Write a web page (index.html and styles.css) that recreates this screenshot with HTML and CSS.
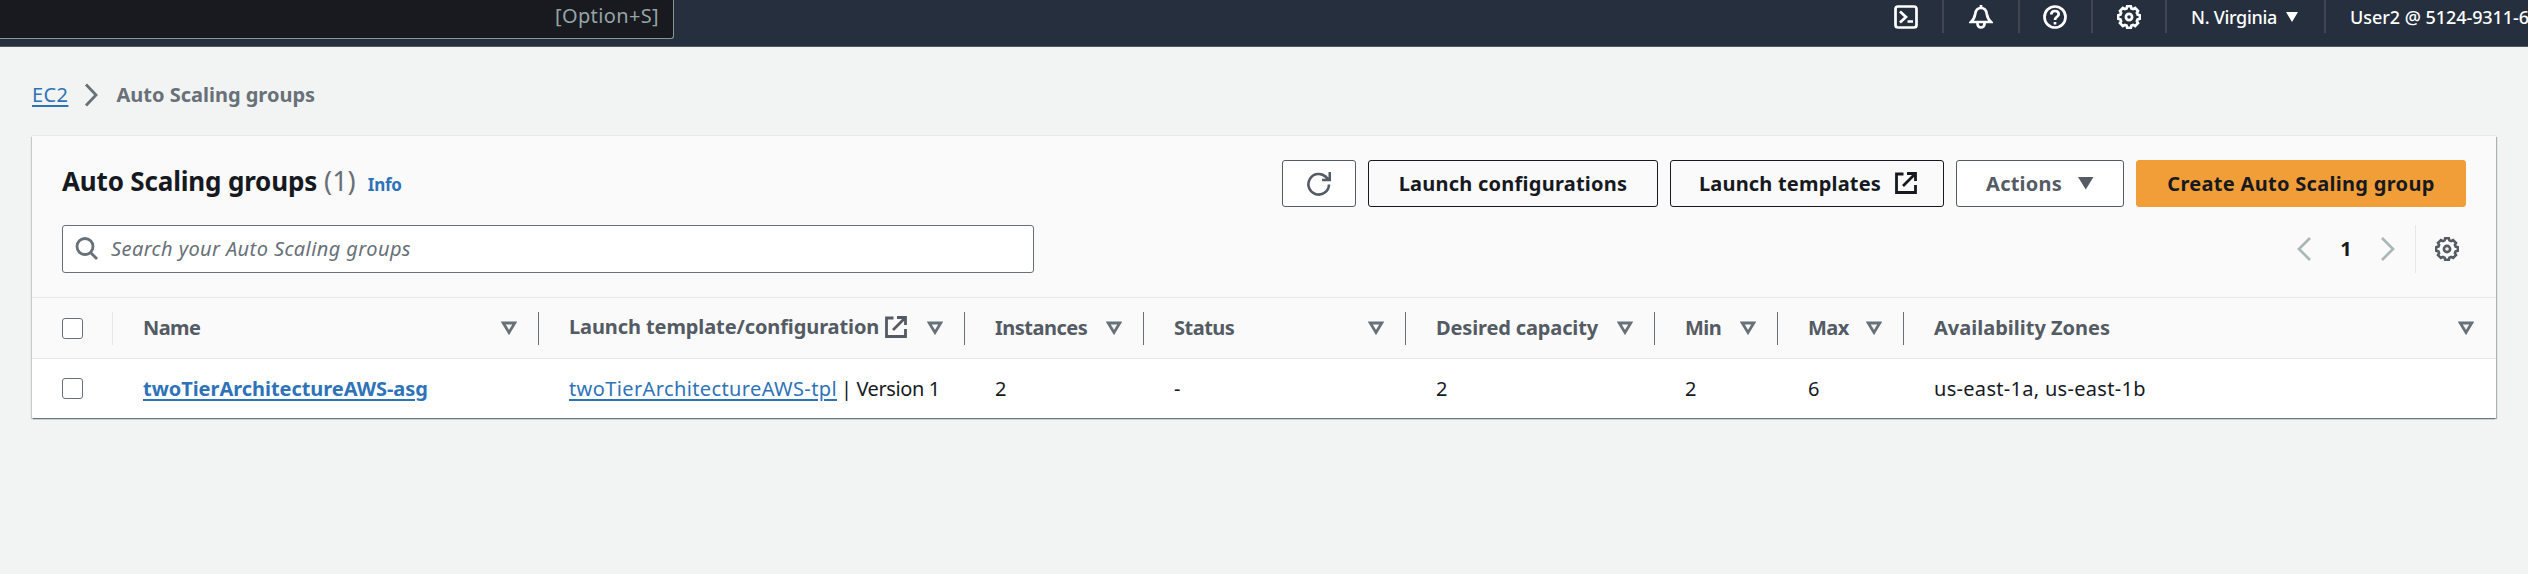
FILE: index.html
```
<!DOCTYPE html>
<html lang="en">
<head>
<meta charset="utf-8">
<title>Auto Scaling groups | EC2</title>
<link rel="stylesheet" href="styles.css">
</head>
<body>
<svg class="defs" aria-hidden="true">
  <symbol id="gear" viewBox="0 0 24 24"><path d="M10.2 1.2h3.6l.6 2.2 1.7.7 2-1.1 2.9 2.9-1.1 2 .7 1.7 2.2.6v3.6l-2.2.6-.7 1.7 1.1 2-2.9 2.9-2-1.1-1.7.7-.6 2.2h-3.6l-.6-2.2-1.7-.7-2 1.1L3 18.1l1.1-2-.7-1.7-2.2-.6v-3.6l2.2-.6.7-1.7-1.1-2L5.900 3l2 1.100 1.700-.7z"/><circle cx="12" cy="12" r="3.100"/></symbol>
  <symbol id="external" viewBox="0 0 22 22"><path d="M8.500 2H1.500v18.500h19V13M12 1.500h8.500V9M20 2 8 14"/></symbol>
  <symbol id="filter" viewBox="0 0 16 14"><path d="M2.200 2h11.600L8 11.500z"/></symbol>
</svg>

<header class="nav">
  <div class="nav-search"><span>[Option+S]</span></div>
  <div class="nav-tools">
    <div class="tool tool-shell"><svg class="icon24" viewBox="0 0 24 24"><rect x="1.500" y="1.500" width="21" height="21" rx="2.500"/><path d="M6 6.500 12 12l-6 5.500M13.500 16.500h5.500"/></svg></div>
    <div class="tool tool-bell"><svg class="icon24" viewBox="0 0 24 24"><path d="M12 0v3M2 17c3-2.500 3.500-4 4.200-8C6.700 5 9 3 12 3s5.300 2 5.800 6c.7 4 1.200 5.500 4.200 8z"/><path d="M8.500 17.500v1.500a3.500 3.500 0 0 0 7 0v-1.500"/></svg></div>
    <div class="tool tool-help"><svg class="icon24" viewBox="0 0 24 24"><circle cx="12" cy="12" r="10.500"/><path d="M8.300 9.500C8.300 7.200 9.800 6 12 6s3.700 1.200 3.700 3.200c0 2.600-3.700 2.600-3.700 5.800M12 17v2.500"/></svg></div>
    <div class="tool tool-settings"><svg class="icon24"><use href="#gear"/></svg></div>
    <div class="tool tool-region"><span>N. Virginia</span><svg class="nav-caret" viewBox="0 0 12 10"><path d="M0 0h12L6 10z"/></svg></div>
    <div class="tool tool-user">User2 @ 5124-9311-6</div>
  </div>
</header>

<nav class="breadcrumb">
  <a href="#">EC2</a>
  <svg class="crumb-sep" viewBox="0 0 14 24"><path d="M2 1.500 12 12 2 22.500"/></svg>
  <span class="crumb-current">Auto Scaling groups</span>
</nav>

<main class="panel">
  <div class="panel-head">
    <div class="title-row">
      <h1><span class="title">Auto Scaling groups</span><span class="count">(1)</span><a class="info">Info</a></h1>
      <div class="actions">
        <button class="btn btn-refresh" aria-label="Refresh"><svg viewBox="0 0 24 24"><path d="M22 12.500A10.300 10.300 0 1 1 19 5M22.800 0v8H15M18 4l4 4"/></svg></button>
        <button class="btn btn-dark btn-config">Launch configurations</button>
        <button class="btn btn-dark btn-templates">Launch templates<svg class="ext"><use href="#external"/></svg></button>
        <button class="btn btn-actions">Actions<svg class="caret" viewBox="0 0 16 13"><path d="M0 0h15.500L7.750 12.500z"/></svg></button>
        <button class="btn btn-primary">Create Auto Scaling group</button>
      </div>
    </div>
    <div class="tools-row">
      <div class="search"><svg viewBox="0 0 24 24"><circle cx="10" cy="9.500" r="8"/><path d="m15.500 15.500 6.500 6.500"/></svg><span>Search your Auto Scaling groups</span></div>
      <div class="pager">
        <svg class="chev" viewBox="0 0 14 24"><path d="M13 1 2 12l11 11"/></svg>
        <span class="page">1</span>
        <svg class="chev" viewBox="0 0 14 24"><path d="m1 1 11 11L1 23"/></svg>
        <div class="prefs"><svg><use href="#gear"/></svg></div>
      </div>
    </div>
  </div>

  <div class="grid grid-head">
    <div class="cell cell-check cell-check-head"><span class="checkbox"></span></div>
    <div class="cell"><span class="l-name">Name</span><svg class="filter"><use href="#filter"/></svg></div>
    <div class="cell"><span class="l-launch">Launch template/configuration<svg class="ext"><use href="#external"/></svg></span><svg class="filter"><use href="#filter"/></svg></div>
    <div class="cell"><span class="l-inst">Instances</span><svg class="filter"><use href="#filter"/></svg></div>
    <div class="cell"><span class="l-inst">Status</span><svg class="filter"><use href="#filter"/></svg></div>
    <div class="cell"><span class="l-desired">Desired capacity</span><svg class="filter"><use href="#filter"/></svg></div>
    <div class="cell"><span class="l-inst">Min</span><svg class="filter"><use href="#filter"/></svg></div>
    <div class="cell"><span class="l-inst">Max</span><svg class="filter"><use href="#filter"/></svg></div>
    <div class="cell"><span>Availability Zones</span><svg class="filter"><use href="#filter"/></svg></div>
  </div>
  <div class="grid grid-row">
    <div class="cell cell-check"><span class="checkbox"></span></div>
    <div class="cell"><a class="asg" href="#">twoTierArchitectureAWS-asg</a></div>
    <div class="cell"><a class="tpl" href="#">twoTierArchitectureAWS-tpl</a><span class="version">| Version 1</span></div>
    <div class="cell">2</div>
    <div class="cell">-</div>
    <div class="cell">2</div>
    <div class="cell">2</div>
    <div class="cell">6</div>
    <div class="cell"><span class="zones">us-east-1a, us-east-1b</span></div>
  </div>
</main>
</body>
</html>
```

FILE: styles.css
```
* { box-sizing: border-box; }
body {
  margin: 0;
  height: 574px;
  overflow: hidden;
  background: #f2f3f3;
  color: #16191f;
  font: 20px/30px "Noto Sans", "Open Sans", sans-serif;
  white-space: nowrap;
}
svg { display: block; flex: none; fill: none; stroke: currentColor; }
.defs { position: absolute; width: 0; height: 0; }
a { color: #2e73b8; text-underline-offset: 3px; text-decoration-thickness: 2px; }

/* Navigation */
.nav {
  display: flex;
  justify-content: space-between;
  height: 47px;
  background: #262f3e;
  border-bottom: 1px solid #545b64;
  overflow: hidden;
}
.nav-search {
  width: 674px;
  height: 39px;
  padding: 1px 14px 0 0;
  background: #191a1f;
  border: 1px solid #879596;
  border-width: 0 1px 1px 0;
  border-radius: 0 0 3px 0;
  color: #95a5a6;
  text-align: right;
  letter-spacing: .37px;
}
.nav-tools { display: flex; width: 658px; height: 33px; color: #fff; font-size: 18px; }
.tool { display: flex; flex: none; align-items: center; justify-content: center; border-right: 2px solid #414750; }
.tool:last-child { border-right: 0; }
.tool-shell { width: 74px; }
.tool-bell { width: 76px; }
.tool-help { width: 73px; padding-right: 1px; }
.tool-settings { width: 74px; }
.tool-region { width: 159px; justify-content: flex-start; padding-left: 24px; letter-spacing: -.3px; font-weight: 500; }
.tool-user { justify-content: flex-start; padding-left: 24px; font-weight: 500; letter-spacing: -.05px; }
.icon24 { width: 24px; height: 24px; stroke-width: 2.7; }
.nav-caret { width: 12px; height: 10px; margin-left: 9px; fill: currentColor; stroke: none; }

/* Breadcrumb */
.breadcrumb { display: flex; align-items: center; height: 30px; margin: 33px 0 0 32px; }
.breadcrumb a { letter-spacing: .4px; }
.crumb-sep { width: 14px; height: 24px; margin: 0 18px 0 16px; stroke: #687078; stroke-width: 2.8; }
.crumb-current { color: #687078; font-weight: 700; }

/* Panel */
.panel {
  margin: 26px 32px 0;
  background: #fff;
  box-shadow: 0 2px 1px -1px #6b757b, 1px 1px 1px 0 #a9b2b3, -1px 1px 1px 0 #c4cbcb, 0 -1px 0 0 #e8eaea;
}
.panel-head { height: 161px; padding: 24px 30px 0; background: #fafafa; }
.title-row, .tools-row { display: flex; justify-content: space-between; align-items: center; }
.title-row { height: 47px; }
.tools-row { height: 48px; margin-top: 18px; }
h1 { display: flex; align-items: baseline; margin: 0; padding-bottom: 2px; font-size: 26px; line-height: 40px; }
.title { letter-spacing: -.17px; }
.count { margin-left: 7px; color: #687078; font-size: 27px; font-weight: 400; }
.info { margin-left: 12px; font-size: 17px; letter-spacing: -.2px; }

.actions { display: flex; gap: 12px; }
.btn {
  display: flex;
  align-items: center;
  justify-content: center;
  height: 47px;
  padding: 0;
  border: 1px solid #545b64;
  border-radius: 3px;
  background: #fff;
  color: #545b64;
  font: 700 20px/30px "Noto Sans", "Open Sans", sans-serif;
  letter-spacing: .24px;
}
.btn-refresh { width: 74px; }
.btn-refresh svg { width: 24px; height: 24px; stroke-width: 2.6; }
.btn-dark { background: #fafafa; border-color: #16191f; color: #16191f; }
.btn-config { width: 290px; }
.btn-templates { width: 274px; padding-left: 2px; letter-spacing: .2px; }
.btn-actions { width: 168px; letter-spacing: .2px; }
.btn-primary { width: 330px; background: #f29e38; border-color: #f29e38; color: #16191f; letter-spacing: .3px; }
.ext { width: 22px; height: 22px; stroke-width: 2.8; }
.btn .ext { margin: -2px 0 0 14px; }
.caret { width: 16px; height: 13px; margin: -1px 0 0 16px; fill: currentColor; stroke: none; }

.search {
  display: flex;
  align-items: center;
  width: 972px;
  height: 48px;
  padding-left: 12px;
  background: #fff;
  border: 1px solid #687078;
  border-radius: 3px;
  color: #687078;
  font-style: italic;
  letter-spacing: .4px;
}
.search svg { width: 24px; height: 24px; margin-right: 12px; stroke-width: 2.8; }
.pager { display: flex; align-items: center; }
.chev { width: 14px; height: 24px; stroke: #aab7b8; stroke-width: 2.7; }
.page { width: 70px; text-align: center; font-weight: 700; }
.prefs { display: flex; align-items: center; height: 48px; margin-left: 20px; padding: 0 7px 0 19px; border-left: 1px solid #e6e8e8; color: #545b64; }
.prefs svg { width: 24px; height: 24px; stroke-width: 2.6; }

/* Table */
.grid { display: grid; grid-template-columns: 81px 426px 426px 179px 262px 249px 123px 126px 1fr; align-items: center; }
.grid-head { height: 62px; background: #fafafa; border: 1px solid #e6e8e8; border-width: 1px 0; color: #545b64; font-weight: 700; }
.grid-row { height: 59px; }
.cell { display: flex; align-items: center; height: 33px; padding-left: 30px; line-height: 30px; }
.grid-head .cell { justify-content: space-between; padding-right: 21px; border-right: 1px solid #687078; }
.grid-head .cell-check { border-right-color: #e6e8e8; }
.grid-head .cell:last-child { border-right: 0; padding-right: 22px; }
.checkbox { width: 21px; height: 21px; background: #fff; border: 1px solid #687078; border-radius: 3px; }
.filter { width: 16px; height: 14px; stroke: #687078; stroke-width: 2.8; }
.l-name { letter-spacing: -.6px; }
.l-launch { display: flex; align-items: center; letter-spacing: -.1px; margin-top: -2px; }
.l-launch .ext { margin-left: 6px; }
.l-inst { letter-spacing: -.5px; }
.l-desired { letter-spacing: -.14px; }
.asg { font-weight: 700; letter-spacing: -.04px; }
.tpl { letter-spacing: .38px; }
.version { margin-left: 4px; letter-spacing: -.4px; }
.zones { letter-spacing: .3px; }
```
